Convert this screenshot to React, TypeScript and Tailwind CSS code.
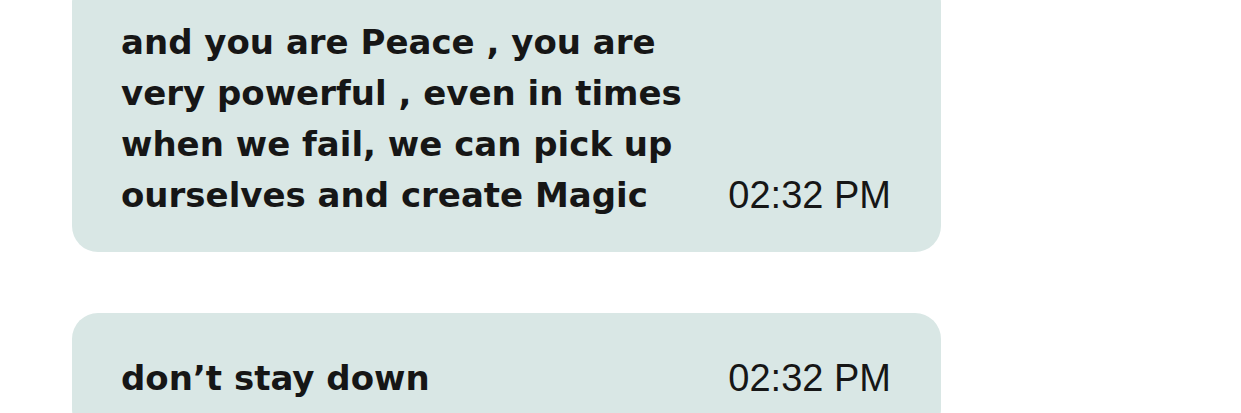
const messages = [
  {
    id: 1,
    text: 'and you are Peace , you are very powerful , even in times when we fail, we can pick up ourselves and create Magic',
    time: '02:32 PM',
  },
  { id: 2, text: 'don’t stay down', time: '02:32 PM' },
]

export default function App() {
  return (
    <div className="w-[1241px] h-[413px] overflow-hidden bg-white">
      <div className="flex flex-col gap-[61px] pl-[72px] -mt-[23px]">
        {messages.map((m) => (
          <Bubble key={m.id} text={m.text} time={m.time} />
        ))}
      </div>
    </div>
  )
}

function Bubble({ text, time }: { text: string; time: string }) {
  return (
    <div className="w-[869px] rounded-[26px] bg-[#d9e7e5] pl-[49px] pr-[50px] pt-[40px] pb-[31px] flex items-end justify-between">
      <p
        className="w-[570px] text-[34px] leading-[51px] font-bold text-[#161616]"
        style={{ fontFamily: '"DejaVu Sans", sans-serif' }}
      >
        {text}
      </p>
      <span
        className="text-[38px] leading-[51px] text-[#161616] whitespace-nowrap"
        style={{ fontFamily: '"Liberation Sans", Arial, sans-serif' }}
      >
        {time}
      </span>
    </div>
  )
}
